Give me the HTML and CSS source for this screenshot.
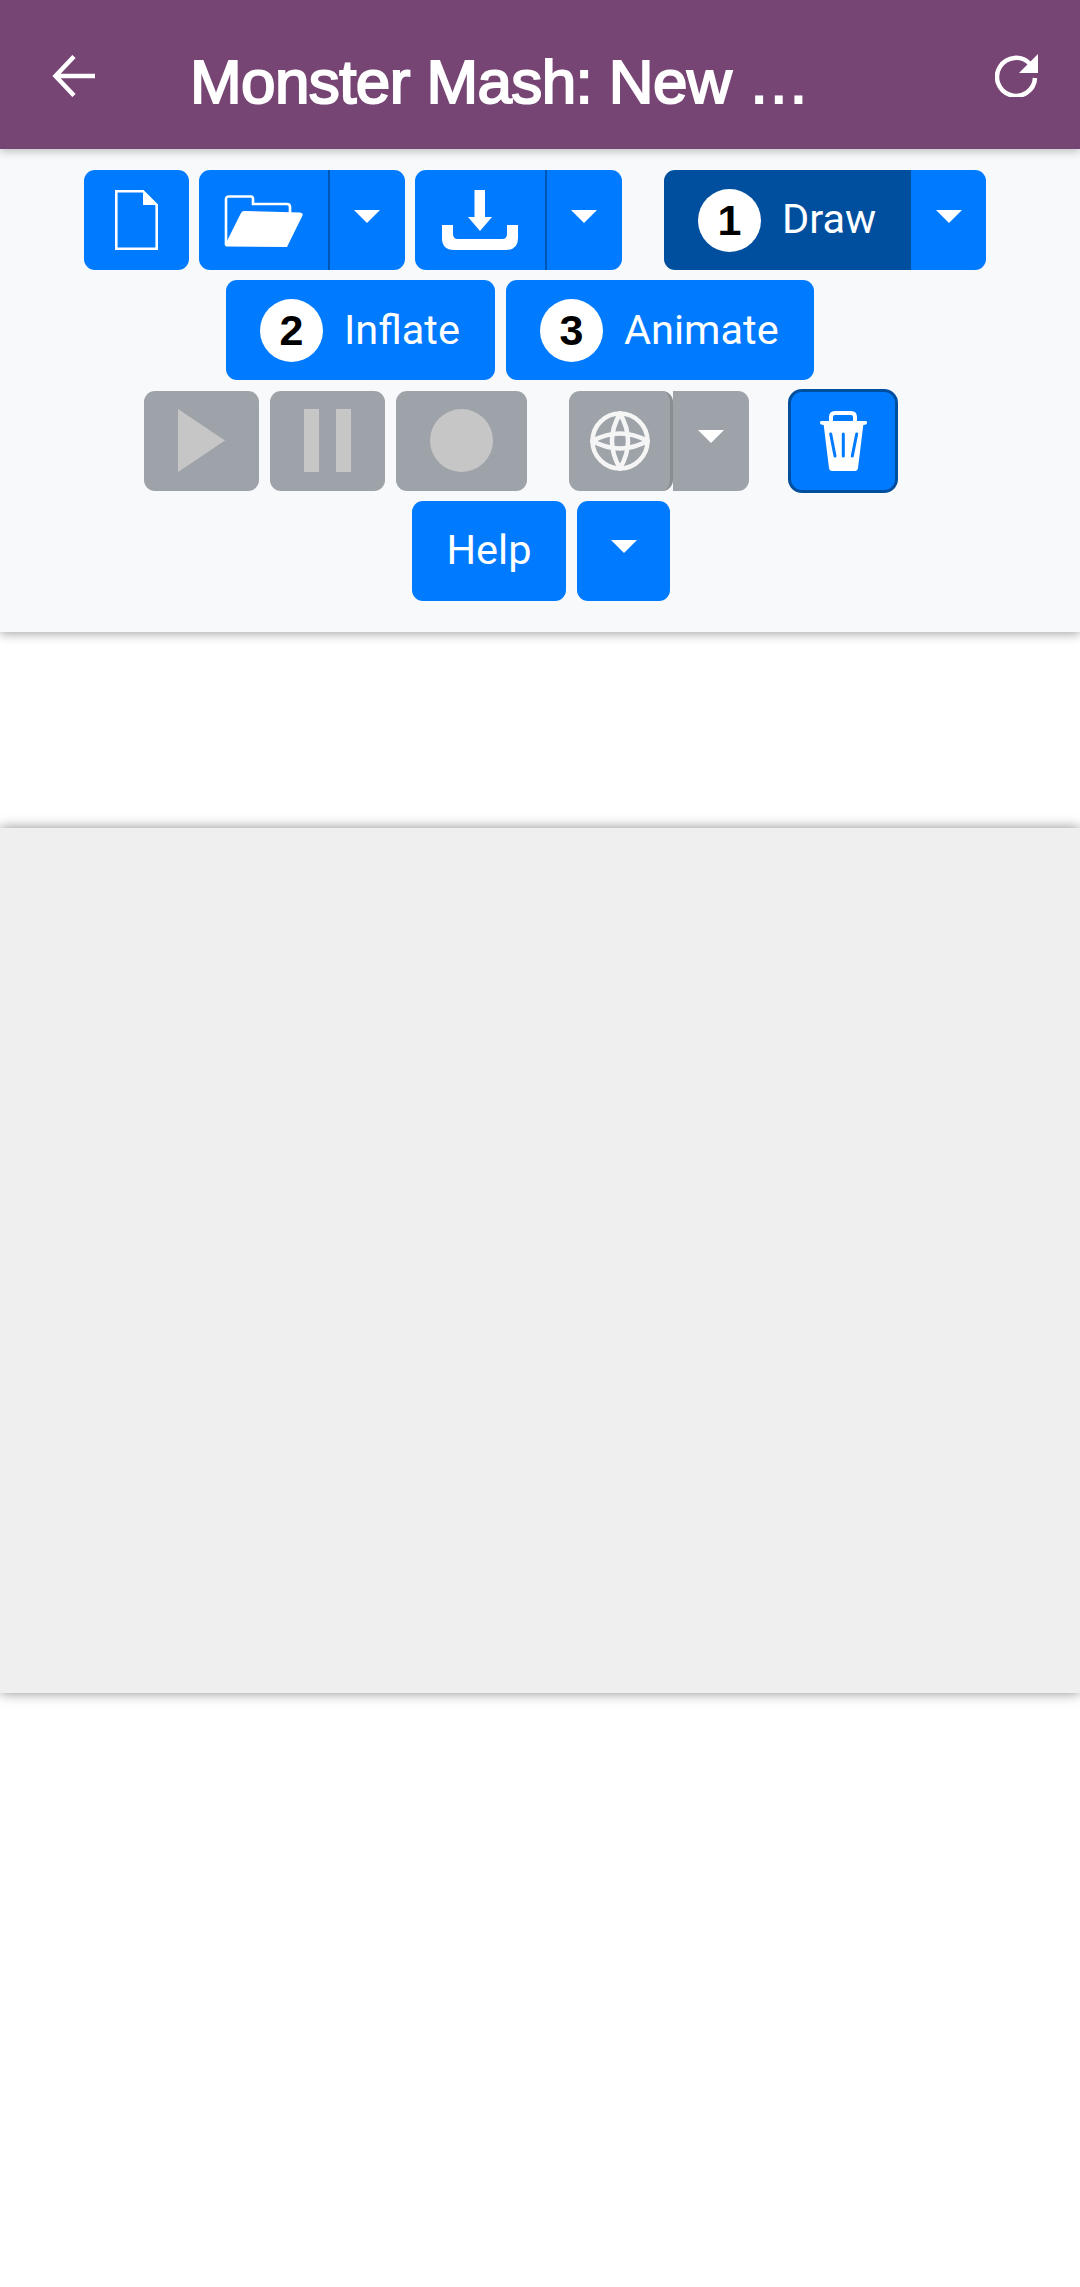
FILE: index.html
```html
<!DOCTYPE html>
<html lang="en">
<head>
<meta charset="utf-8">
<title>Monster Mash</title>
<link rel="stylesheet" href="styles.css">
</head>
<body>
<header class="appbar">
  <svg class="back" viewBox="0 0 43 42"><path d="M43 21H4M22 1.5L3.5 21L22 40.5"/></svg>
  <div class="title">Monster Mash: New …</div>
  <svg class="reload" viewBox="0 0 43 43"><path class="arc" d="M35 10A19 19 0 1 0 40 24"/><path class="head" d="M43 0V19H24Z"/></svg>
</header>
<section class="toolbar">
  <div class="row row1">
    <button class="btn file-btn"><svg class="i-file" viewBox="0 0 43 60"><path class="line" d="M1.3 1.3H28L41.7 15V58.7H1.3Z"/><path class="solid" d="M28 0L43 15H28Z"/></svg></button>
    <div class="group">
      <button class="btn left open-btn"><svg class="i-folder" viewBox="0 0 79 52"><path class="line" d="M2 50V4Q2 1.500 5 1.500H27Q29 1.500 29 4V9H63Q66 9 66 12V18"/><path class="solid" d="M1 50L17 18Q18 16 20 16L76 17.500Q79.500 18 78.500 20.500L63 52L4 51.500Q1 51.500 1 50Z"/></svg></button>
      <button class="btn right drop divided"><span class="caret"></span></button>
    </div>
    <div class="group">
      <button class="btn left save-btn"><svg class="i-save" viewBox="0 0 76 60"><path class="solid" d="M32.500 0H43V27H50L38 41L26 27H32.500Z"/><path class="solid" d="M0 35H11V44Q11 49 16 49H60Q65 49 65 44V35H76V48Q76 60 64 60H12Q0 60 0 48Z"/></svg></button>
      <button class="btn right drop divided"><span class="caret"></span></button>
    </div>
    <div class="group draw-group">
      <button class="btn left active label"><span class="num">1</span><span class="txt">Draw</span></button>
      <button class="btn right drop draw-drop"><span class="caret"></span></button>
    </div>
  </div>
  <div class="row row2">
    <button class="btn label inflate-btn"><span class="num">2</span><span class="txt">Inflate</span></button>
    <button class="btn label animate-btn"><span class="num">3</span><span class="txt">Animate</span></button>
  </div>
  <div class="row row3">
    <button class="btn off play-btn"><svg class="i-play" viewBox="0 0 47 63"><path d="M0 0L47 31.500L0 63Z"/></svg></button>
    <button class="btn off play-btn"><svg class="i-pause" viewBox="0 0 47 63"><path d="M0 0H15V63H0ZM32 0H47V63H32Z"/></svg></button>
    <button class="btn off rec-btn"><span class="dot"></span></button>
    <div class="group globe-group">
      <button class="btn off globe-btn"><svg class="i-globe" viewBox="0 0 60 60"><circle cx="30" cy="30" r="27.500"/><path d="M30 2.500Q14 30 30 57.500Q46 30 30 2.500Z"/><path d="M2.500 30Q30 15 57.500 30Q30 45 2.500 30Z"/></svg></button>
      <button class="btn off right globe-drop"><span class="caret"></span></button>
    </div>
    <button class="btn trash-btn"><svg class="i-trash" viewBox="0 0 47 60"><path class="lid" d="M11 12V6Q11 2 15 2H31Q35 2 35 6V12"/><path class="solid" d="M1 10H46Q47 10 47 11.500Q47 13 46 13.500L43.300 14L38 57Q37.500 60 35 60H12Q9.500 60 9 57L3.700 14L1 13.500Q0 13 0 11.500Q0 10 1 10Z"/><path class="slot" d="M10.700 23L15 45M23.300 23V45M36.700 23L32.300 45"/></svg></button>
  </div>
  <div class="row row4">
    <button class="btn help-btn"><span class="txt">Help</span></button>
    <button class="btn drop help-drop"><span class="caret"></span></button>
  </div>
</section>
<section class="canvas"></section>
</body>
</html>
```

FILE: styles.css
```css
* { box-sizing: border-box; }
html, body { margin: 0; padding: 0; background: #fff; }
body { height: 2287px; overflow: hidden; font-family: Roboto, sans-serif; }

.appbar {
  position: relative;
  z-index: 2;
  display: flex;
  align-items: center;
  height: 149px;
  padding: 0 42px 0 52px;
  background: #764574;
  box-shadow: 0 3px 8px rgba(0, 0, 0, .22);
}
.back { width: 43px; height: 42px; margin-top: 3px; fill: none; stroke: #fff; stroke-width: 4.500; }
.title {
  flex: 1;
  margin: 15px 0 0 95px;
  color: #fff;
  font: 400 62px/1 "Liberation Sans", Arial, sans-serif;
  letter-spacing: -.600px;
  -webkit-text-stroke: 2px #fff;
  white-space: nowrap;
}
.reload { width: 43px; height: 43px; margin-top: 2px; }
.reload .arc { fill: none; stroke: #fff; stroke-width: 4.500; }
.reload .head { fill: #fff; }

.toolbar {
  position: relative;
  z-index: 1;
  display: flex;
  flex-direction: column;
  gap: 10.330px;
  height: 483px;
  padding-top: 21px;
  background: #f8f9fa;
  box-shadow: 0 2px 10px rgba(0, 0, 0, .35);
}
.row { display: flex; align-items: center; gap: 10px; height: 100px; }
.row1 { padding-left: 84px; }
.row2 { padding-left: 226px; gap: 11px; }
.row3 { padding-left: 144px; gap: 11px; }
.row4 { padding-left: 412px; gap: 11px; }

.btn {
  display: flex;
  align-items: center;
  justify-content: center;
  height: 100px;
  margin: 0;
  padding: 0;
  border: 0;
  border-radius: 11px;
  background: #007bff;
  color: #fff;
  font: 400 41.500px/1 Roboto, sans-serif;
}
.btn svg { display: block; }
.txt { margin-top: -2px; }
.group { display: flex; }
.left { border-radius: 11px 0 0 11px; }
.right { border-radius: 0 11px 11px 0; }
.drop { width: 77px; }
.divided { box-shadow: inset 2px 0 #0056b3; }

.caret {
  display: block;
  width: 0;
  height: 0;
  margin-top: -8px;
  border-top: 13px solid #fff;
  border-left: 13px solid transparent;
  border-right: 13px solid transparent;
}

.label { justify-content: flex-start; gap: 21px; padding-left: 34px; }
.num {
  display: flex;
  align-items: center;
  justify-content: center;
  width: 63px;
  height: 63px;
  border-radius: 50%;
  background: #fff;
  color: #000;
  font: bold 43px/1 "Liberation Sans", Arial, sans-serif;
}
.active { background: #004f9f; width: 247px; }
.inflate-btn { width: 269px; }
.animate-btn { width: 308px; }

.solid { fill: #fff; }
.line { fill: none; stroke: #fff; stroke-width: 2.600; }

.file-btn { width: 105px; }
.i-file { width: 43px; height: 60px; }
.open-btn { width: 129px; }
.i-folder { width: 79px; height: 52px; margin-top: 2px; }
.save-btn { width: 130px; }
.i-save { width: 76px; height: 60px; }
.draw-group { margin-left: 32px; }
.draw-drop { width: 75px; }

.off { background: #9da3a9; }
.play-btn { width: 115px; }
.i-play, .i-pause { width: 47px; height: 63px; fill: #c6c6c6; }
.rec-btn { width: 131px; }
.dot { width: 63px; height: 63px; border-radius: 50%; background: #c6c6c6; }

.globe-group { margin-left: 31px; }
.globe-btn { position: relative; z-index: 1; width: 104px; border-right: 3px solid #898e93; }
.i-globe { width: 60px; height: 60px; fill: none; stroke: #f5f5f5; stroke-width: 4.500; }
.globe-drop { width: 76px; }

.trash-btn {
  width: 110px;
  height: 104px;
  margin-left: 28px;
  border: 3px solid #004f9f;
  border-radius: 14px;
}
.i-trash { width: 47px; height: 60px; }
.lid { fill: none; stroke: #fff; stroke-width: 4; }
.slot { fill: none; stroke: #007bff; stroke-width: 3; stroke-linecap: round; }

.help-btn { width: 154px; }
.help-drop { width: 93px; }

.canvas {
  height: 865px;
  margin-top: 196px;
  background: #efefef;
  box-shadow: 0 0 12px rgba(0, 0, 0, .45);
}
```
